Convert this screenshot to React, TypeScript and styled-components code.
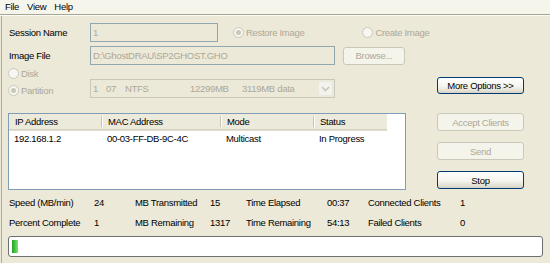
import React from 'react';
import styled, { createGlobalStyle, css } from 'styled-components';

const GlobalStyle = createGlobalStyle`
    html, body {
        margin: 0;
        padding: 0;
        background: #ece9d8;
    }
    body {
        width: 550px;
        height: 263px;
        overflow: hidden;
        font-family: "Liberation Sans", Arial, sans-serif;
        font-size: 9.5px;
        letter-spacing: -0.3px;
        color: #000;
    }
`;

const DISABLED_TEXT = '#aca899';
const DISABLED_BORDER = '#cac8bb';

const Window = styled.div`
    width: 550px;
    height: 263px;
    display: flex;
    flex-direction: column;
    background: #ece9d8;
`;

const MenuBar = styled.div`
    display: flex;
    height: 14px;
    padding-left: 1px;
    background: #f6f5ec;
    border-bottom: 1px solid #a7a692;
    box-shadow: 0 1px 0 #fbfaf4;
`;

const MenuItem = styled.span`
    padding: 0 4px;
    line-height: 13px;
`;

const Body = styled.div`
    flex: 1;
    margin: 1px 0 0 1px;
    border-left: 1px solid #aeac9d;
    padding: 6px 0 0 6px;
    display: flex;
    flex-direction: column;
`;

const FormRow = styled.div<{ $top?: number }>`
    display: flex;
    align-items: center;
    margin-top: ${p => p.$top ?? 0}px;
`;

const Label = styled.div`
    width: 82px;
    padding-left: 1px;
    box-sizing: border-box;
`;

const TextBox = styled.div<{ $width: number }>`
    width: ${p => p.$width}px;
    height: 19px;
    box-sizing: border-box;
    border: 1px solid #93a8ae;
    padding: 0 2px;
    line-height: 17px;
    color: ${DISABLED_TEXT};
    white-space: nowrap;
    overflow: hidden;
`;

const RadioLabel = styled.label<{ $left?: number }>`
    display: flex;
    align-items: center;
    gap: 2px;
    margin-left: ${p => p.$left ?? 0}px;
    color: ${DISABLED_TEXT};
    height: 13px;
`;

const RadioCircle = styled.span<{ $checked?: boolean }>`
    width: 11px;
    height: 11px;
    box-sizing: border-box;
    border-radius: 50%;
    border: 1px solid ${DISABLED_BORDER};
    background: #f7f6f0;
    display: flex;
    align-items: center;
    justify-content: center;
    &::after {
        content: '';
        width: 5px;
        height: 5px;
        border-radius: 50%;
        background: ${p => (p.$checked ? '#c9c7b9' : 'transparent')};
    }
`;

const Button = styled.button<{ $width: number; $height?: number }>`
    width: ${p => p.$width}px;
    height: ${p => p.$height ?? 18}px;
    padding: 0;
    font-family: inherit;
    font-size: 9.5px;
    letter-spacing: -0.3px;
    border-radius: 3px;
    box-sizing: border-box;
    border: 1px solid #003c74;
    color: #000;
    background: linear-gradient(to bottom, #ffffff 0%, #f5f4ee 55%, #e3e0d4 85%, #d6d0c5 100%);
    ${p =>
        p.disabled &&
        css`
            border-color: ${DISABLED_BORDER};
            color: ${DISABLED_TEXT};
            background: #f5f4ea;
        `}
`;

const BrowseButton = styled(Button)`
    margin-left: 8px;
`;

const PartitionRow = styled.div`
    display: flex;
    align-items: flex-start;
    margin-top: 2px;
    height: 32px;
`;

const RadioColumn = styled.div`
    width: 82px;
    display: flex;
    flex-direction: column;
    gap: 4px;
`;

const SelectBox = styled.div`
    width: 245px;
    height: 19px;
    margin-top: 12px;
    padding-left: 2px;
    box-sizing: border-box;
    border: 1px solid ${DISABLED_BORDER};
    display: flex;
    align-items: center;
    color: ${DISABLED_TEXT};
    white-space: nowrap;
`;

const SelectPart = styled.span<{ $width: number }>`
    width: ${p => p.$width}px;
    flex: none;
`;

const SelectArrow = styled.span`
    margin-left: auto;
    width: 15px;
    height: 15px;
    margin-right: 1px;
    box-sizing: border-box;
    border: 1px solid #ebe9df;
    background: #f3f2ec;
    border-radius: 2px;
    display: flex;
    align-items: center;
    justify-content: center;
`;

const MoreOptions = styled(Button)`
    margin: 10px 0 0 102px;
`;

const ListSection = styled.div`
    display: flex;
    margin-top: 14px;
`;

const ListView = styled.div`
    width: 398px;
    height: 77px;
    box-sizing: border-box;
    border: 1px solid #7f9db9;
    background: #fff;
`;

const COLUMNS = '93px 119px 93px 1fr';

const ListHeader = styled.div`
    display: grid;
    grid-template-columns: ${COLUMNS};
    height: 15px;
    background: #ebeadb;
    border-bottom: 1px solid #d6d2c2;
    box-shadow: 0 1px 0 #e2dfd0;
    margin-right: 18px;
`;

const HeaderCell = styled.div<{ $last?: boolean }>`
    padding-left: 6px;
    line-height: 15px;
    position: relative;
    &::after {
        content: '';
        display: ${p => (p.$last ? 'none' : 'block')};
        position: absolute;
        right: 0;
        top: 2px;
        bottom: 2px;
        width: 1px;
        background: #c7c5b2;
        box-shadow: 1px 0 0 #fff;
    }
`;

const ListRow = styled.div`
    display: grid;
    grid-template-columns: ${COLUMNS};
    height: 16px;
    margin-top: 1px;
`;

const Cell = styled.div`
    padding-left: 5px;
    line-height: 15px;
    white-space: nowrap;
`;

const SideButtons = styled.div`
    margin-left: 31px;
    display: flex;
    flex-direction: column;
    gap: 11px;
`;

const StatsGrid = styled.div`
    display: grid;
    grid-template-columns: 85px 41px 75px 36px 81px 41px 92px 1fr;
    grid-auto-rows: 20px;
    margin-top: 3px;
    line-height: 19px;
`;

const StatCell = styled.div`
    padding-left: 1px;
    white-space: nowrap;
`;

const Progress = styled.div`
    width: 535px;
    height: 21px;
    margin-top: 3px;
    box-sizing: border-box;
    border: 1px solid #6f6f6f;
    border-radius: 3px;
    background: #fff;
    padding: 3px 3px;
    display: flex;
    gap: 2px;
`;

const Chunk = styled.div`
    width: 6px;
    height: 13px;
    background: linear-gradient(to right, #2a9e2a 0%, #3cc43c 45%, #7fe07f 100%);
`;

const ChevronDown = () => (
    <svg width="9" height="6" viewBox="0 0 9 6">
        <polyline points="1,1 4.5,4.5 8,1" fill="none" stroke="#c9c7ba" strokeWidth="1.6" />
    </svg>
);

const Radio: React.FC<{ text: string; checked?: boolean; left?: number }> = ({ text, checked, left }) => (
    <RadioLabel $left={left}>
        <RadioCircle $checked={checked} />
        {text}
    </RadioLabel>
);

const clients = [
    { ip: '192.168.1.2', mac: '00-03-FF-DB-9C-4C', mode: 'Multicast', status: 'In Progress' },
];

const stats = [
    ['Speed (MB/min)', '24', 'MB Transmitted', '15', 'Time Elapsed', '00:37', 'Connected Clients', '1'],
    ['Percent Complete', '1', 'MB Remaining', '1317', 'Time Remaining', '54:13', 'Failed Clients', '0'],
];

const percentComplete = 1;
const progressInner = 527;

const App: React.FC = () => {
    // XP style progress: fixed 6px blocks with a 2px gap
    const chunks = Math.max(1, Math.ceil((progressInner * percentComplete) / 100 / 8));

    return (
        <Window>
            <GlobalStyle />
            <MenuBar>
                <MenuItem>File</MenuItem>
                <MenuItem>View</MenuItem>
                <MenuItem>Help</MenuItem>
            </MenuBar>
            <Body>
                <FormRow $top={1}>
                    <Label>Session Name</Label>
                    <TextBox $width={128}>1</TextBox>
                    <Radio text="Restore Image" checked left={15} />
                    <Radio text="Create Image" left={58} />
                </FormRow>
                <FormRow $top={4}>
                    <Label>Image File</Label>
                    <TextBox $width={245}>D:\GhostDRAU\SP2GHOST.GHO</TextBox>
                    <BrowseButton $width={62} disabled>
                        Browse...
                    </BrowseButton>
                </FormRow>
                <PartitionRow>
                    <RadioColumn>
                        <Radio text="Disk" />
                        <Radio text="Partition" checked />
                    </RadioColumn>
                    <SelectBox>
                        <SelectPart $width={13}>1</SelectPart>
                        <SelectPart $width={19}>07</SelectPart>
                        <SelectPart $width={65}>NTFS</SelectPart>
                        <SelectPart $width={52}>12299MB</SelectPart>
                        <SelectPart $width={60}>3119MB data</SelectPart>
                        <SelectArrow>
                            <ChevronDown />
                        </SelectArrow>
                    </SelectBox>
                    <MoreOptions $width={87} $height={17}>
                        More Options &gt;&gt;
                    </MoreOptions>
                </PartitionRow>
                <ListSection>
                    <ListView>
                        <ListHeader>
                            <HeaderCell>IP Address</HeaderCell>
                            <HeaderCell>MAC Address</HeaderCell>
                            <HeaderCell>Mode</HeaderCell>
                            <HeaderCell $last>Status</HeaderCell>
                        </ListHeader>
                        {clients.map(c => (
                            <ListRow key={c.mac}>
                                <Cell>{c.ip}</Cell>
                                <Cell>{c.mac}</Cell>
                                <Cell>{c.mode}</Cell>
                                <Cell>{c.status}</Cell>
                            </ListRow>
                        ))}
                    </ListView>
                    <SideButtons>
                        <Button $width={87} disabled>Accept Clients</Button>
                        <Button $width={87} disabled>Send</Button>
                        <Button $width={87}>Stop</Button>
                    </SideButtons>
                </ListSection>
                <StatsGrid>
                    {stats.flat().map((s, i) => (
                        <StatCell key={i}>{s}</StatCell>
                    ))}
                </StatsGrid>
                <Progress>
                    {Array.from({ length: chunks }).map((_, i) => (
                        <Chunk key={i} />
                    ))}
                </Progress>
            </Body>
        </Window>
    );
};

export default App;
